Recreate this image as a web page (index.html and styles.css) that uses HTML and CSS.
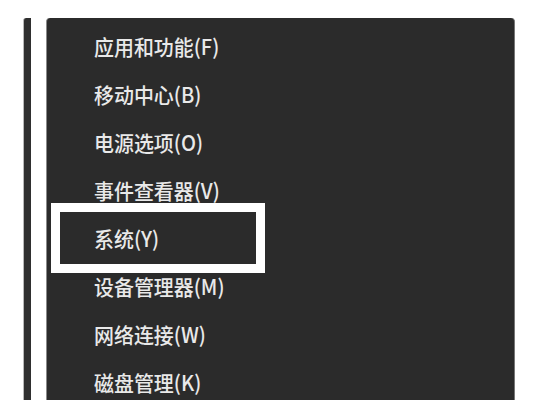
FILE: index.html
```html
<!DOCTYPE html>
<html lang="zh-CN">
<head>
<meta charset="utf-8">
<title>快速链接菜单</title>
<link rel="stylesheet" href="styles.css">
</head>
<body>
<div class="stage">
  <div class="strip"></div>
  <ul class="menu">
    <li class="item"><span class="label">应用和功能(F)</span></li>
    <li class="item"><span class="label">移动中心(B)</span></li>
    <li class="item"><span class="label">电源选项(O)</span></li>
    <li class="item"><span class="label">事件查看器(V)</span></li>
    <li class="item marked"><span class="mark"></span><span class="label">系统(Y)</span></li>
    <li class="item"><span class="label">设备管理器(M)</span></li>
    <li class="item"><span class="label">网络连接(W)</span></li>
    <li class="item"><span class="label">磁盘管理(K)</span></li>
  </ul>
</div>
</body>
</html>
```
FILE: styles.css
```css
html, body {
  margin: 0;
  padding: 0;
  background: #ffffff;
  height: 400px;
  overflow: hidden;
}

.stage {
  display: flex;
  align-items: stretch;
  height: 382px;
  padding: 18px 0 0 23px;
  gap: 15px;
}

.strip {
  width: 8px;
  background: #2f2f2f;
  border-left: 1px solid #b8b8b8;
  border-top-left-radius: 3px;
  box-sizing: border-box;
}

.menu {
  list-style: none;
  margin: 0;
  padding: 4px 0 0 0;
  width: 469px;
  background: #2b2b2b;
  border-left: 1px solid #8a8a8a;
  border-right: 1px solid #777777;
  border-radius: 4px 4px 0 0;
  box-sizing: border-box;
}

.item {
  position: relative;
  height: 48px;
  display: flex;
  align-items: center;
  padding-left: 47px;
}

.label {
  font-family: "Noto Sans CJK SC", "Noto Sans", sans-serif;
  font-size: 21px;
  font-weight: 500;
  color: #e9e9e9;
  white-space: nowrap;
  display: inline-block;
  transform: scaleX(0.95);
  transform-origin: left center;
}

.mark {
  position: absolute;
  left: 4px;
  top: -11px;
  width: 214px;
  height: 70px;
  border: 9px solid #ffffff;
  box-sizing: border-box;
}
```
